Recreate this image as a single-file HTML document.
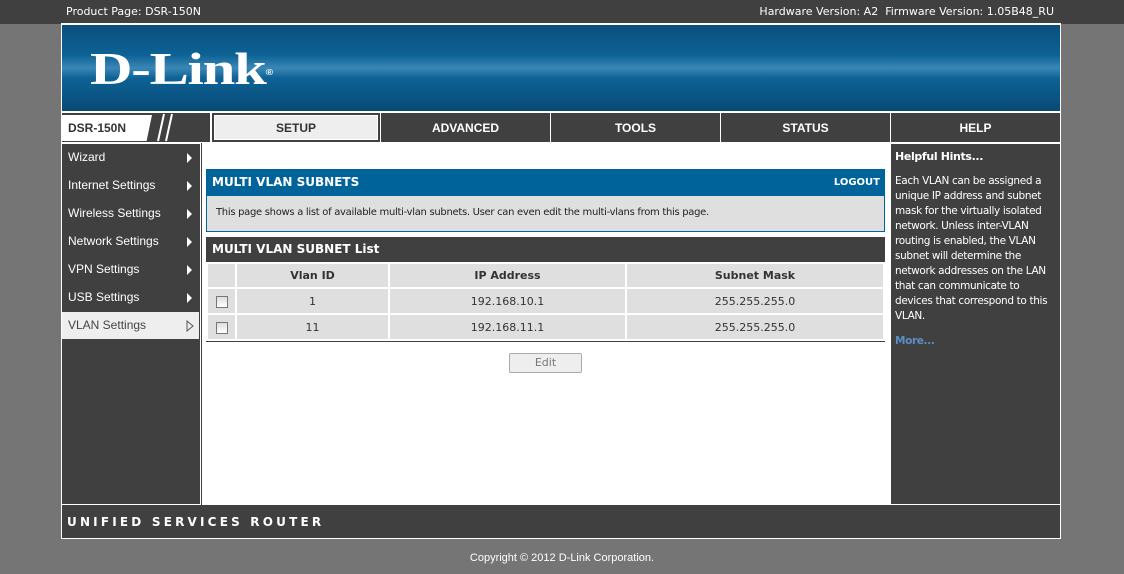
<!DOCTYPE html><html><head><style>
*{margin:0;padding:0;box-sizing:border-box}
body{width:1124px;height:574px;background:#757575;font-family:"DejaVu Sans","Liberation Sans",sans-serif;font-size:11px;position:relative;overflow:hidden;color:#333}
.a{position:absolute}
.top{left:0;top:0;width:1124px;height:24px;background:#404040;color:#fff;font-size:11px}
.wrap{left:61px;top:23px;width:1000px;height:516px;background:#fff}
.banner{left:62px;top:25px;width:998px;height:86px;background:linear-gradient(180deg,#0a4f7c 0%,#0d6295 35%,#3a87b6 50%,#0d6295 62%,#084a76 100%)}
.logo{left:90px;top:44px;color:#fff;font-family:"Liberation Serif",serif;font-weight:bold;font-size:46px;letter-spacing:-1px;line-height:50px;transform:scaleX(1.28);transform-origin:0 0}
.nav{top:113px;height:29px;background:#404040;color:#fff;font-weight:bold;font-size:12px;text-align:center;line-height:30px;font-family:"Liberation Sans",sans-serif}
.menu{left:62px;width:137px;height:27px;background:#404040;color:#fff;font-family:"Liberation Sans",sans-serif;font-size:12px;line-height:27px;padding-left:6px}
.menu:after{content:"";position:absolute;right:7px;top:9px;border-left:5px solid #fff;border-top:5px solid transparent;border-bottom:5px solid transparent}
td{text-align:center}
</style></head><body>
<div class="a top"><span class="a" style="left:66px;top:5px">Product Page: DSR-150N</span><span class="a" style="right:70px;top:5px">Hardware Version: A2 &nbsp;Firmware Version: 1.05B48_RU</span></div>
<div class="a wrap"></div>
<div class="a banner"></div>
<div class="a logo">D-Link<sup style="font-size:8px;font-family:'Liberation Sans';vertical-align:top;position:relative;top:4px">®</sup></div>
<div class="a nav" style="left:62px;width:148px"></div>
<div class="a" style="left:62px;top:115px;width:90px;height:26px;background:#fff;color:#333;font-weight:bold;font-size:12px;line-height:26px;padding-left:6px;font-family:'Liberation Sans',sans-serif;clip-path:polygon(0 0,100% 0,94% 100%,0 100%)">DSR-150N</div>
<svg class="a" style="left:150px;top:113px" width="30" height="29"><path d="M8 28L14 1M16 28L22 1" stroke="#fff" stroke-width="2"/></svg>
<div class="a nav" style="left:212px;width:168px;background:#eee;color:#333;border:2px solid #404040;outline:1px solid #fff;outline-offset:-3px;line-height:26px">SETUP</div>
<div class="a nav" style="left:381px;width:169px">ADVANCED</div>
<div class="a nav" style="left:551px;width:169px">TOOLS</div>
<div class="a nav" style="left:721px;width:169px">STATUS</div>
<div class="a nav" style="left:891px;width:169px">HELP</div>
<div class="a" style="left:62px;top:144px;width:138px;height:360px;background:#404040"></div>
<div class="a menu" style="top:144px">Wizard</div>
<div class="a menu" style="top:172px">Internet Settings</div>
<div class="a menu" style="top:200px">Wireless Settings</div>
<div class="a menu" style="top:228px">Network Settings</div>
<div class="a menu" style="top:256px">VPN Settings</div>
<div class="a menu" style="top:284px">USB Settings</div>
<div class="a" style="left:62px;top:312px;width:137px;height:27px;background:#eee;color:#444;font-family:'Liberation Sans',sans-serif;font-size:12px;line-height:27px;padding-left:6px">VLAN Settings<svg class="a" style="left:124px;top:8px" width="8" height="12"><path d="M1 1L7 6L1 11Z" fill="none" stroke="#555"/></svg></div>
<div class="a" style="left:201px;top:143px;width:1px;height:362px;background:#404040"></div>
<div class="a" style="left:206px;top:169px;width:679px;height:63px;border:1px solid #00649a;background:#dfdfdf"></div>
<div class="a" style="left:206px;top:169px;width:679px;height:27px;background:#00649a;color:#fff;font-weight:bold;font-size:12px;line-height:27px;padding-left:6px">MULTI VLAN SUBNETS<span class="a" style="right:5px;top:0;font-size:10px">LOGOUT</span></div>
<div class="a" style="left:216px;top:207px;font-size:10px;letter-spacing:-0.3px;color:#222">This page shows a list of available multi-vlan subnets. User can even edit the multi-vlans from this page.</div>
<div class="a" style="left:206px;top:237px;width:679px;height:105px;background:#404040"></div>
<div class="a" style="left:212px;top:242px;color:#fff;font-weight:bold;font-size:12px">MULTI VLAN SUBNET List</div>
<table class="a" style="left:206px;top:262px;width:679px;border-collapse:separate;border-spacing:2px;background:#fff;font-size:11px">
<tr style="height:23px;background:#dfdfdf;font-weight:bold"><td style="width:27px"></td><td style="width:151px">Vlan ID</td><td style="width:235px">IP Address</td><td>Subnet Mask</td></tr>
<tr style="height:24px;background:#dfdfdf"><td><span style="display:inline-block;width:12px;height:12px;border:1px solid #777;background:linear-gradient(#ddd,#fff);vertical-align:middle"></span></td><td>1</td><td>192.168.10.1</td><td>255.255.255.0</td></tr>
<tr style="height:24px;background:#dfdfdf"><td><span style="display:inline-block;width:12px;height:12px;border:1px solid #777;background:linear-gradient(#ddd,#fff);vertical-align:middle"></span></td><td>11</td><td>192.168.11.1</td><td>255.255.255.0</td></tr>
</table>
<div class="a" style="left:509px;top:353px;width:73px;height:20px;border:1px solid #aaa;border-radius:2px;background:#eee;color:#777;text-align:center;line-height:18px;font-size:11px">Edit</div>
<div class="a" style="left:891px;top:144px;width:169px;height:360px;background:#404040;color:#fff;font-size:10.5px;letter-spacing:-0.35px;line-height:15px;padding:5px 4px">
<div style="font-weight:bold;font-size:11px;margin-bottom:10px">Helpful Hints...</div>
<div>Each VLAN can be assigned a unique IP address and subnet mask for the virtually isolated network. Unless inter-VLAN routing is enabled, the VLAN subnet will determine the network addresses on the LAN that can communicate to devices that correspond to this VLAN.</div>
<div style="font-weight:bold;color:#5b8fc5;margin-top:10px">More...</div></div>
<div class="a" style="left:62px;top:505px;width:998px;height:33px;background:#404040;color:#fff;font-family:'DejaVu Sans',sans-serif;font-weight:bold;font-size:12px;letter-spacing:3.2px;line-height:34px;padding-left:5px">UNIFIED SERVICES ROUTER</div>
<div class="a" style="left:0;top:552px;width:1124px;text-align:center;color:#fff;font-size:11px;font-family:'Liberation Sans',sans-serif">Copyright © 2012 D-Link Corporation.</div>
</body></html>
